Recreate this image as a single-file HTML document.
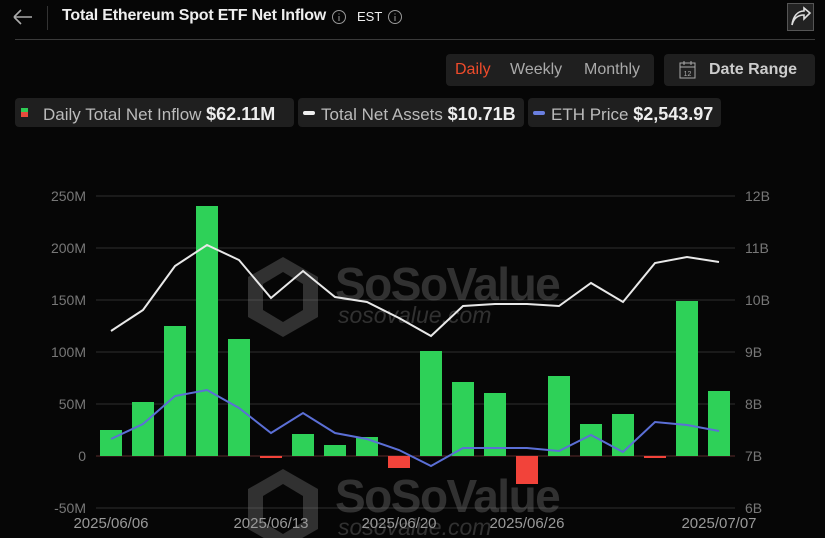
<!DOCTYPE html>
<html><head><meta charset="utf-8"><style>
body{margin:0;width:825px;height:538px;background:#060606;overflow:hidden;font-family:"Liberation Sans",sans-serif;position:relative}
.a{position:absolute;white-space:nowrap}
.box{position:absolute;background:#1f1f1f;border-radius:4px}
</style></head><body>
<svg class="a" style="left:10px;top:7px" width="24" height="20"><path d="M4 10H22M4 10L11 3M4 10L11 17" stroke="#aaa" stroke-width="1.6" fill="none"/></svg>
<div class="a" style="left:47px;top:6px;width:1px;height:24px;background:#333"></div>
<div class="a" style="left:62px;top:7px;color:#eee;font-weight:bold;font-size:16px;letter-spacing:-0.2px">Total Ethereum Spot ETF Net Inflow</div>
<svg class="a" style="left:331px;top:9px" width="16" height="16"><circle cx="8" cy="8" r="6.5" stroke="#999" fill="none"/><path d="M8 7V12M8 4.5V5.5" stroke="#999"/></svg>
<div class="a" style="left:357px;top:9px;color:#eee;font-size:13px">EST</div>
<svg class="a" style="left:387px;top:9px" width="16" height="16"><circle cx="8" cy="8" r="6.5" stroke="#999" fill="none"/><path d="M8 7V12M8 4.5V5.5" stroke="#999"/></svg>
<div class="a" style="left:787px;top:3px;width:27px;height:28px;border:1px solid #555;box-sizing:border-box;background:#222"></div>
<svg class="a" style="left:789px;top:6px" width="24" height="22"><path d="M3 19C5 11 10 9 15 9V13L21 7L15 2V5C8 5 4 11 3 19Z" stroke="#ddd" stroke-width="1.6" fill="none"/></svg>
<div class="a" style="left:15px;top:39px;width:800px;height:1px;background:#3a3a3a"></div>
<div class="box" style="left:446px;top:54px;width:208px;height:32px"></div>
<div class="a" style="left:455px;top:61px;font-size:16px;color:#ee4b2b">Daily</div>
<div class="a" style="left:510px;top:61px;font-size:16px;color:#aaa">Weekly</div>
<div class="a" style="left:584px;top:61px;font-size:16px;color:#aaa">Monthly</div>
<div class="box" style="left:664px;top:54px;width:151px;height:32px"></div>
<svg class="a" style="left:678px;top:59px" width="20" height="22"><rect x="2" y="4" width="15" height="15" stroke="#aaa" fill="none"/><path d="M2 8H17M6 2V6M13 2V6" stroke="#aaa"/><text x="9.5" y="17" font-size="7" fill="#aaa" text-anchor="middle" font-family="Liberation Sans">12</text></svg>
<div class="a" style="left:709px;top:61px;font-size:16px;color:#ccc;font-weight:bold">Date Range</div>
<div class="box" style="left:15px;top:98px;width:279px;height:29px"></div>
<div class="a" style="left:21px;top:108px;width:7px;height:4px;background:#2ecc55"></div><div class="a" style="left:21px;top:112px;width:7px;height:5px;background:#e74c3c"></div>
<div class="a" style="left:43px;top:104px;font-size:17px;color:#bbb">Daily Total Net Inflow <b style="color:#eee;font-size:18px">$62.11M</b></div>
<div class="box" style="left:298px;top:98px;width:226px;height:29px"></div>
<div class="a" style="left:303px;top:111px;width:12px;height:4px;border-radius:2px;background:#eee"></div>
<div class="a" style="left:321px;top:104px;font-size:17px;color:#bbb">Total Net Assets <b style="color:#eee;font-size:18px">$10.71B</b></div>
<div class="box" style="left:528px;top:98px;width:193px;height:29px"></div>
<div class="a" style="left:533px;top:111px;width:12px;height:4px;border-radius:2px;background:#6a7fe0"></div>
<div class="a" style="left:551px;top:104px;font-size:17px;color:#bbb">ETH Price <b style="color:#eee;font-size:18px">$2,543.97</b></div>
<svg class="a" style="left:0;top:0" width="825" height="538" font-family="Liberation Sans">
<g stroke="#2e2e2e" stroke-width="1"><path d="M96 196H735M96 248H735M96 300H735M96 352H735M96 404H735M96 508H735"/></g>
<g fill="#777" font-size="14" text-anchor="end"><text x="86" y="201">250M</text><text x="86" y="253">200M</text><text x="86" y="305">150M</text><text x="86" y="357">100M</text><text x="86" y="409">50M</text><text x="86" y="461">0</text><text x="86" y="513">-50M</text></g>
<g fill="#777" font-size="14"><text x="745" y="201">12B</text><text x="745" y="253">11B</text><text x="745" y="305">10B</text><text x="745" y="357">9B</text><text x="745" y="409">8B</text><text x="745" y="461">7B</text><text x="745" y="513">6B</text></g>
<g opacity="0.33" fill="#888"><path d="M283 257L318 277V317L283 337L248 317V277Z M283 272L303 284V310L283 322L263 310V284Z" fill-rule="evenodd"/><text x="335" y="300" font-size="46" font-weight="bold" letter-spacing="-1.5">SoSoValue</text><text x="338" y="323" font-size="23" font-style="italic">sosovalue.com</text>
<path d="M283 469L318 489V529L283 549L248 529V489Z M283 484L303 496V522L283 534L263 522V496Z" fill-rule="evenodd"/><text x="335" y="512" font-size="46" font-weight="bold" letter-spacing="-1.5">SoSoValue</text><text x="338" y="535" font-size="23" font-style="italic">sosovalue.com</text></g>
<path d="M96 456H735" stroke="#5a2a2a"/>
<g fill="#2ed158"><rect x="100" y="430" width="22" height="26"/><rect x="132" y="402" width="22" height="54"/><rect x="164" y="326" width="22" height="130"/><rect x="196" y="206" width="22" height="250"/><rect x="228" y="339" width="22" height="117"/><rect x="292" y="434" width="22" height="22"/><rect x="324" y="445" width="22" height="11"/><rect x="356" y="437" width="22" height="19"/><rect x="420" y="351" width="22" height="105"/><rect x="452" y="382" width="22" height="74"/><rect x="484" y="393" width="22" height="63"/><rect x="548" y="376" width="22" height="80"/><rect x="580" y="424" width="22" height="32"/><rect x="612" y="414" width="22" height="42"/><rect x="676" y="301" width="22" height="155"/><rect x="708" y="391" width="22" height="65"/></g>
<g fill="#f2433a"><rect x="260" y="456" width="22" height="2"/><rect x="388" y="456" width="22" height="12"/><rect x="516" y="456" width="22" height="28"/><rect x="644" y="456" width="22" height="2"/></g>
<polyline fill="none" stroke="#e8e8e8" stroke-width="2" points="111,331 143,310 175,266 207,245 239,260 271,298 303,271 335,297 367,302 399,318 431,336 463,306 495,304 527,304 559,306 591,283 623,302 655,263 687,257 719,262"/>
<polyline fill="none" stroke="#5b6fd6" stroke-width="2" points="111,439 143,424 175,396 207,390 239,408 271,433 303,413 335,433 367,439 399,450 431,466 463,448 495,448 527,448 559,451 591,435 623,452 655,422 687,425 719,431"/>
<g fill="#999" font-size="15" text-anchor="middle"><text x="111" y="528">2025/06/06</text><text x="271" y="528">2025/06/13</text><text x="399" y="528">2025/06/20</text><text x="527" y="528">2025/06/26</text><text x="719" y="528">2025/07/07</text></g>
</svg>
</body></html>
